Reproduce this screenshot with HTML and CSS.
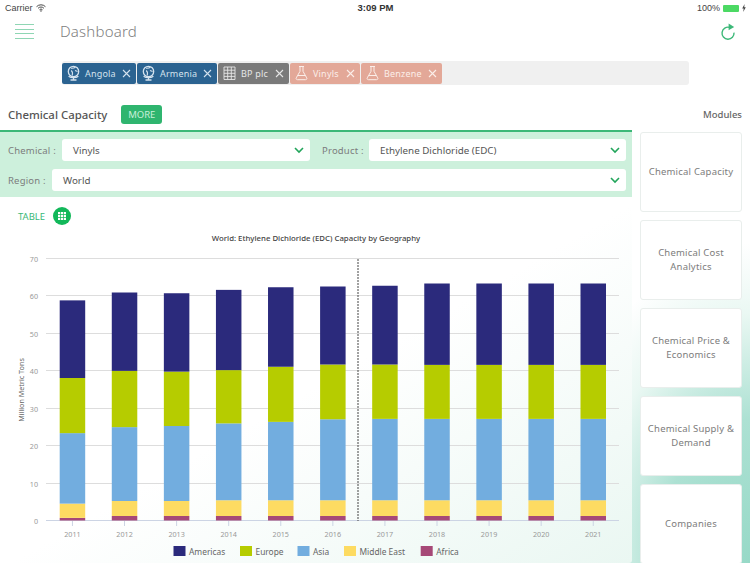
FILE: index.html
```html
<!DOCTYPE html>
<html lang="en">
<head>
<meta charset="utf-8">
<title>Dashboard</title>
<link rel="stylesheet" href="styles.css">
</head>
<body>
<div class="app">
  <div class="status">
    <div class="status-left">Carrier
      <svg class="wifi" width="10" height="8" viewBox="0 0 11 9"><path d="M.5 3a7 7 0 0 1 10 0M2.200 4.800a4.600 4.600 0 0 1 6.600 0M3.800 6.500a2.300 2.300 0 0 1 3.400 0" fill="none" stroke="#444" stroke-width="1.100"/><path d="M5.500 9 4.400 7.600a1.600 1.600 0 0 1 2.200 0z" fill="#444"/></svg>
    </div>
    <div class="status-time">3:09 PM</div>
    <div class="status-right">100%
      <span class="battery"></span>
      <svg width="4" height="8" viewBox="0 0 4 8"><path d="M2.600 0 .2 4.500h1.500L1.200 8l2.600-4.800H2.200z" fill="#444"/></svg>
    </div>
  </div>

  <header class="header">
    <div class="menu"><span></span><span></span><span></span><span></span></div>
    <h1 class="title">Dashboard</h1>
    <svg class="refresh" width="16" height="18" viewBox="0 0 16 18">
      <path d="M9.600 4.400A6 6 0 1 0 14 9.600" fill="none" stroke="#3cb878" stroke-width="1.400"/>
      <path d="M8.600 .6 14.200 4 8.600 7.200z" fill="#3cb878"/>
    </svg>
  </header>

  <div class="chips">
    <div class="chip chip-blue w-angola">
      <svg class="chip-icon" width="15" height="16" viewBox="0 0 15 16"><circle cx="7.500" cy="6.500" r="5.200" fill="none" stroke="currentColor" stroke-width="1.300"/><path d="M5 3.200c1.500.2 3 0 4.500-1M5.200 5.500c1.400 1.200 1.600 3 1 5M9 5.500l2.600 1" fill="none" stroke="currentColor" stroke-width="1.100"/><path d="M2.600 11.200c2.600 2 7.200 2 9.800 0M7.500 13v1.500M4.500 15h6" fill="none" stroke="currentColor" stroke-width="1.300"/></svg>
      <span class="chip-label">Angola</span>
      <svg class="chip-x" width="9" height="9" viewBox="0 0 9 9"><path d="M1 1l7 7M8 1 1 8" stroke="currentColor" stroke-width="1.100"/></svg>
    </div>
    <div class="chip chip-blue w-armenia">
      <svg class="chip-icon" width="15" height="16" viewBox="0 0 15 16"><circle cx="7.500" cy="6.500" r="5.200" fill="none" stroke="currentColor" stroke-width="1.300"/><path d="M5 3.200c1.500.2 3 0 4.500-1M5.200 5.500c1.400 1.200 1.600 3 1 5M9 5.500l2.600 1" fill="none" stroke="currentColor" stroke-width="1.100"/><path d="M2.600 11.200c2.600 2 7.200 2 9.800 0M7.500 13v1.500M4.500 15h6" fill="none" stroke="currentColor" stroke-width="1.300"/></svg>
      <span class="chip-label">Armenia</span>
      <svg class="chip-x" width="9" height="9" viewBox="0 0 9 9"><path d="M1 1l7 7M8 1 1 8" stroke="currentColor" stroke-width="1.100"/></svg>
    </div>
    <div class="chip chip-gray w-bp">
      <svg class="chip-icon" width="15" height="16" viewBox="0 0 15 16"><path d="M2 2h11v12.500H2zM2 5.200h11M2 8.300h11M2 11.400h11M5.700 2v12.500M9.300 2v12.500" fill="none" stroke="currentColor" stroke-width=".9"/></svg>
      <span class="chip-label">BP plc</span>
      <svg class="chip-x" width="9" height="9" viewBox="0 0 9 9"><path d="M1 1l7 7M8 1 1 8" stroke="currentColor" stroke-width="1.100"/></svg>
    </div>
    <div class="chip chip-salmon w-vinyls">
      <svg class="chip-icon" width="15" height="16" viewBox="0 0 15 16"><path d="M5 1.500h5M6 1.500v4.800L2.300 12.800c-.6 1 .1 1.900 1.100 1.900h8.200c1 0 1.700-.9 1.100-1.900L9 6.300V1.500M4 10.500h7" fill="none" stroke="currentColor" stroke-width="1"/></svg>
      <span class="chip-label">Vinyls</span>
      <svg class="chip-x" width="9" height="9" viewBox="0 0 9 9"><path d="M1 1l7 7M8 1 1 8" stroke="currentColor" stroke-width="1.100"/></svg>
    </div>
    <div class="chip chip-salmon w-benzene">
      <svg class="chip-icon" width="15" height="16" viewBox="0 0 15 16"><path d="M5 1.500h5M6 1.500v4.800L2.300 12.800c-.6 1 .1 1.900 1.100 1.900h8.200c1 0 1.700-.9 1.100-1.900L9 6.300V1.500M4 10.500h7" fill="none" stroke="currentColor" stroke-width="1"/></svg>
      <span class="chip-label">Benzene</span>
      <svg class="chip-x" width="9" height="9" viewBox="0 0 9 9"><path d="M1 1l7 7M8 1 1 8" stroke="currentColor" stroke-width="1.100"/></svg>
    </div>
  </div>

  <div class="section-row">
    <h2 class="section-title">Chemical Capacity</h2>
    <button class="more">MORE</button>
    <div class="modules-title">Modules</div>
  </div>

  <div class="main">
    <section class="panel">
      <div class="filters">
        <div class="filter-row">
          <label class="filter-label label-chem">Chemical :</label>
          <div class="select select-chem">Vinyls<svg class="chev" width="10" height="7" viewBox="0 0 10 7"><path d="M1 1l4 4 4-4" fill="none" stroke="#22a55b" stroke-width="1.600"/></svg></div>
          <label class="filter-label label-product">Product :</label>
          <div class="select select-grow">Ethylene Dichloride (EDC)<svg class="chev" width="10" height="7" viewBox="0 0 10 7"><path d="M1 1l4 4 4-4" fill="none" stroke="#22a55b" stroke-width="1.600"/></svg></div>
        </div>
        <div class="filter-row">
          <label class="filter-label label-region">Region :</label>
          <div class="select select-grow">World<svg class="chev" width="10" height="7" viewBox="0 0 10 7"><path d="M1 1l4 4 4-4" fill="none" stroke="#22a55b" stroke-width="1.600"/></svg></div>
        </div>
      </div>
      <div class="table-toggle">
        <span class="table-text">TABLE</span>
        <svg width="18" height="18" viewBox="0 0 18 18"><circle cx="9" cy="9" r="9" fill="#12b85a"/><path d="M5 5h2.200v2.200H5zM7.900 5h2.200v2.200H7.900zM10.800 5H13v2.200h-2.200zM5 7.900h2.200v2.200H5zM7.900 7.900h2.200v2.200H7.900zM10.800 7.900H13v2.200h-2.200zM5 10.800h2.200V13H5zM7.900 10.800h2.200V13H7.900zM10.800 10.800H13V13h-2.200z" fill="#fff"/></svg>
      </div>
      <svg id="chart" class="chart" width="632" height="334" viewBox="0 229 632 334"></svg>
    </section>

    <aside class="modules">
      <div class="card">Chemical Capacity</div>
      <div class="card">Chemical Cost<br>Analytics</div>
      <div class="card">Chemical Price &amp;<br>Economics</div>
      <div class="card">Chemical Supply &amp;<br>Demand</div>
      <div class="card">Companies</div>
    </aside>
  </div>
</div>
<script src="chart.js"></script>
</body>
</html>
```

FILE: styles.css
```css
* { box-sizing: border-box; }
html, body { margin: 0; height: 100%; }
body {
  width: 750px;
  height: 563px;
  overflow: hidden;
  font-family: "Noto Sans", "Open Sans", sans-serif;
  color: #666;
  background:
    radial-gradient(ellipse 200px 320px at 100% 100%, #97d9c7 0%, #ade1d3 45%, rgba(220,243,235,.6) 78%, rgba(255,255,255,0) 100%),
    #fff;
}
.app { display: flex; flex-direction: column; height: 563px; overflow: hidden; }

.status {
  height: 15px;
  padding: 1px 4px 0 5px;
  display: flex;
  align-items: center;
  justify-content: space-between;
  font: 9px/14px "Liberation Sans", sans-serif;
  color: #444;
}
.status-left { display: flex; align-items: center; gap: 3px; flex: 1; }
.status-right { display: flex; align-items: center; justify-content: flex-end; gap: 3px; flex: 1; }
.status-time { font-weight: 700; color: #333; font-size: 9.500px; }
.battery { width: 16px; height: 7px; background: #4cd964; border-radius: 1px; display: block; }

.header {
  height: 31px;
  padding: 0 14px 0 15px;
  display: flex;
  align-items: center;
}
.menu { width: 19px; display: flex; flex-direction: column; gap: 3.700px; margin-top: 2px; }
.menu span { height: 1px; background: #8fd6b4; display: block; }
.title { margin: 0 0 0 26px; font-size: 15px; font-weight: 300; letter-spacing: .2px; color: #808080; flex: 1; }
.refresh { margin-top: 3px; }

.chips {
  margin: 15px 0 0 62px;
  width: 627px;
  height: 24px;
  background: #f0f0f0;
  border-radius: 3px;
  display: flex;
  align-items: center;
  gap: 1px;
}
.chip {
  height: 21px;
  border-radius: 2px;
  display: flex;
  align-items: center;
  padding: 0 5px 0 4px;
  font-size: 9px;
  letter-spacing: .2px;
}
.chip-blue { background: #2b6391; color: #d4e2ee; }
.chip-gray { background: #7a7a7a; color: #e6e6e6; }
.chip-salmon { background: #e3a898; color: #fbeee9; }
.chip-label { margin-left: 4px; flex: 1; }
.w-angola { width: 74px; }
.w-armenia { width: 80px; }
.w-bp { width: 71px; }
.w-vinyls { width: 70px; }
.w-benzene { width: 81px; }

.section-row {
  height: 45px;
  padding: 13px 8px 0;
  display: flex;
  align-items: center;
}
.section-title { margin: 0; font-size: 11.400px; font-weight: 500; color: #555; }
.more {
  margin-left: 14px;
  width: 41px;
  height: 19px;
  padding: 0;
  border: 0;
  border-radius: 3px;
  background: #2fb56f;
  color: #c9f0d9;
  font: 9.500px "Noto Sans", sans-serif;
}
.modules-title { margin-left: auto; font-size: 9.500px; font-weight: 500; color: #666; }

.main { flex: 1; display: flex; min-height: 0; }
.panel {
  width: 632px;
  height: 433px;
  border-radius: 0 0 3px 0;
  background: linear-gradient(150deg, #fff 55%, #eaf7f2 100%);
}
.filters {
  height: 67px;
  background: #cdf0dc;
  border-top: 2px solid #3cb878;
  padding: 7px 6px 0 8px;
  display: flex;
  flex-direction: column;
  gap: 8px;
}
.filter-row { display: flex; align-items: center; }
.filter-label { font-size: 9.500px; color: #7c7c7c; letter-spacing: .2px; white-space: nowrap; }
.label-chem { width: 54px; }
.label-product { width: 47px; margin-left: 12px; }
.label-region { width: 44px; }
.select {
  height: 22px;
  padding: 0 6px 0 11px;
  background: #fff;
  border-radius: 3px;
  display: flex;
  align-items: center;
  justify-content: space-between;
  font-size: 9.800px;
  color: #555;
}
.select-chem { width: 248px; }
.select-grow { flex: 1; }

.table-toggle {
  height: 32px;
  padding: 6px 0 0 18px;
  display: flex;
  align-items: center;
  gap: 8px;
}
.table-text { font-size: 9.500px; color: #3cb878; }
.chart { display: block; }
.chart text { font-family: "Noto Sans", sans-serif; }
.t-title { font-size: 7.800px; font-weight: 500; fill: #444; text-anchor: middle; }
.t-tick { font-size: 7.200px; fill: #999; }
.t-axis { font-size: 7.200px; fill: #666; text-anchor: middle; }
.t-legend { font-size: 8.400px; fill: #666; }
.grid { stroke: #ddd; stroke-width: 1; }
.axis { stroke: #ccd4e4; stroke-width: 1; }
.split { stroke: #444; stroke-width: 1; stroke-dasharray: 2 1; }

.modules {
  flex: 1;
  padding: 2px 8px 0;
  display: flex;
  flex-direction: column;
  gap: 8px;
}
.card {
  flex: 0 0 80px;
  display: flex;
  align-items: center;
  justify-content: center;
  text-align: center;
  background: #fff;
  border: 1px solid #e9eeec;
  border-radius: 3px;
  font-size: 9.500px;
  line-height: 14.500px;
  letter-spacing: .2px;
  color: #7c7c7c;
}
```

FILE: chart.js
```js
var NS = "http://www.w3.org/2000/svg";
var svg = document.getElementById("chart");
function add(tag, attrs, text) {
  var el = document.createElementNS(NS, tag);
  for (var k in attrs) el.setAttribute(k, attrs[k]);
  if (text !== undefined) el.textContent = text;
  svg.appendChild(el);
  return el;
}
function yOf(v) { return 520.5 - v * 3.75; }

var colors = ["#a64877", "#fddb62", "#72addf", "#b6cc00", "#2b2a7c"];
var tops = [
  [2011, 0.7, 4.5, 23.3, 38.0, 58.7],
  [2012, 1.2, 5.2, 24.9, 39.9, 60.8],
  [2013, 1.2, 5.2, 25.2, 39.7, 60.6],
  [2014, 1.2, 5.4, 25.9, 40.1, 61.5],
  [2015, 1.2, 5.4, 26.3, 41.0, 62.2],
  [2016, 1.2, 5.4, 27.0, 41.6, 62.4],
  [2017, 1.2, 5.4, 27.1, 41.6, 62.6],
  [2018, 1.2, 5.4, 27.1, 41.5, 63.2],
  [2019, 1.2, 5.4, 27.1, 41.5, 63.2],
  [2020, 1.2, 5.4, 27.1, 41.5, 63.2],
  [2021, 1.2, 5.4, 27.1, 41.5, 63.2]
];

add("text", { x: 316, y: 241, "class": "t-title" }, "World: Ethylene Dichloride (EDC) Capacity by Geography");

for (var g = 0; g <= 70; g += 10) {
  var gy = Math.floor(yOf(g)) + 0.5;
  add("line", { x1: 46, x2: 619, y1: gy, y2: gy, "class": g === 0 ? "axis" : "grid" });
  add("text", { x: 38, y: gy + 3.5, "text-anchor": "end", "class": "t-tick" }, g);
}

tops.forEach(function (row, i) {
  var x = 59.7 + i * 52.08;
  var prev = 0;
  for (var s = 1; s < row.length; s++) {
    add("rect", { x: x, y: yOf(row[s]), width: 25.5, height: (row[s] - prev) * 3.75, fill: colors[s - 1] });
    prev = row[s];
  }
  var cx = x + 12.75;
  add("line", { x1: cx, x2: cx, y1: 521, y2: 526, "class": "axis" });
  add("text", { x: cx, y: 536.5, "text-anchor": "middle", "class": "t-tick" }, row[0]);
});

add("line", { x1: 358, x2: 358, y1: 259, y2: 521, "class": "split" });

add("text", { x: 0, y: 0, "class": "t-axis", transform: "translate(24 390) rotate(-90)" }, "Million Metric Tons");

var legend = [
  ["Americas", 173.5, "#2b2a7c"],
  ["Europe", 240, "#b6cc00"],
  ["Asia", 297.5, "#72addf"],
  ["Middle East", 344, "#fddb62"],
  ["Africa", 420.7, "#a64877"]
];
legend.forEach(function (l) {
  add("rect", { x: l[1], y: 546, width: 12, height: 10, fill: l[2] });
  add("text", { x: l[1] + 15.5, y: 554.5, "class": "t-legend" }, l[0]);
});
```
